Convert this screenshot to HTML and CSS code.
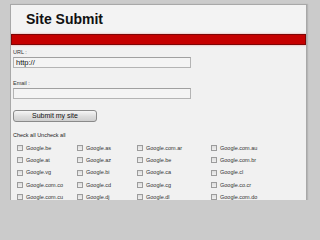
FILE: index.html
```html
<!DOCTYPE html>
<html>
<head>
<meta charset="utf-8">
<link rel="stylesheet" href="styles.css">
</head>
<body>
<div class="panel">
  <div class="header"><h1 class="title">Site Submit</h1></div>
  <div class="redbar"></div>
  <form class="form">
    <label class="label first">URL :</label>
    <div class="field">http://</div>
    <label class="label">Email :</label>
    <div class="field"></div>
    <button class="submit" type="button">Submit my site</button>
    <div class="checkall">Check all Uncheck all</div>
    <div class="grid">
      <label class="item"><span class="cb"></span>Google.be</label>
      <label class="item"><span class="cb"></span>Google.as</label>
      <label class="item"><span class="cb"></span>Google.com.ar</label>
      <label class="item"><span class="cb"></span>Google.com.au</label>
      <label class="item"><span class="cb"></span>Google.at</label>
      <label class="item"><span class="cb"></span>Google.az</label>
      <label class="item"><span class="cb"></span>Google.be</label>
      <label class="item"><span class="cb"></span>Google.com.br</label>
      <label class="item"><span class="cb"></span>Google.vg</label>
      <label class="item"><span class="cb"></span>Google.bi</label>
      <label class="item"><span class="cb"></span>Google.ca</label>
      <label class="item"><span class="cb"></span>Google.cl</label>
      <label class="item"><span class="cb"></span>Google.com.co</label>
      <label class="item"><span class="cb"></span>Google.cd</label>
      <label class="item"><span class="cb"></span>Google.cg</label>
      <label class="item"><span class="cb"></span>Google.co.cr</label>
      <label class="item"><span class="cb"></span>Google.com.cu</label>
      <label class="item"><span class="cb"></span>Google.dj</label>
      <label class="item"><span class="cb"></span>Google.dl</label>
      <label class="item"><span class="cb"></span>Google.com.do</label>
    </div>
  </form>
</div>
</body>
</html>
```
FILE: styles.css
```css
html, body {
  margin: 0;
  padding: 0;
  background: #cbcbcb;
  overflow: hidden;
}
body {
  font-family: "Liberation Sans", Arial, sans-serif;
  color: #222;
  padding-top: 4px;
}
.panel {
  margin-left: 10px;
  width: 295px;
  height: 195px;
  overflow: hidden;
  background: #f1f1f1;
  border: 1px solid #a8a8a8;
  border-bottom: none;
  box-shadow: 1px 0 1px #b5b5b5;
}
.header {
  height: 29px;
  padding: 6px 0 0 15px;
  box-sizing: border-box;
  background: #f3f3f3;
}
.title {
  margin: 0;
  font-size: 14px;
  line-height: 16px;
  font-weight: bold;
  color: #111;
}
.redbar {
  height: 9px;
  background: #c50000;
  border: 1px solid #7e0505;
  box-shadow: 0 0 2px rgba(220, 60, 60, 0.5);
}
.form {
  display: flex;
  flex-direction: column;
  align-items: flex-start;
  padding-left: 2px;
}
.label {
  font-size: 5.5px;
  line-height: 7px;
  margin-top: 12px;
  color: #333;
}
.label.first {
  margin-top: 4px;
}
.field {
  margin-top: 1px;
  width: 178px;
  height: 11px;
  box-sizing: border-box;
  border: 1px solid #b4b4b4;
  border-top-color: #a0a0a0;
  background: #f4f4f4;
  padding-left: 2px;
  font-size: 7.5px;
  line-height: 9px;
  color: #111;
}
.submit {
  margin-top: 11px;
  width: 84px;
  height: 12px;
  padding: 0;
  border: 1px solid #8a8a8a;
  border-radius: 3px;
  background: linear-gradient(#f6f6f6, #dcdcdc 55%, #cfcfcf);
  font-family: "Liberation Sans", Arial, sans-serif;
  font-size: 7px;
  line-height: 10px;
  color: #111;
}
.checkall {
  margin-top: 10px;
  font-size: 5.5px;
  line-height: 7px;
  color: #222;
}
.grid {
  margin-top: 3px;
  padding-left: 4px;
  display: grid;
  grid-template-columns: 60px 60px 74px 74px;
  grid-auto-rows: 12.3px;
}
.item {
  display: flex;
  align-items: center;
  gap: 3px;
  font-size: 5.5px;
  line-height: 7px;
  color: #333;
}
.cb {
  width: 6px;
  height: 6px;
  border: 1px solid #9c9c9c;
  background: linear-gradient(#dedede, #efefef);
  box-sizing: border-box;
  flex: none;
}
```
